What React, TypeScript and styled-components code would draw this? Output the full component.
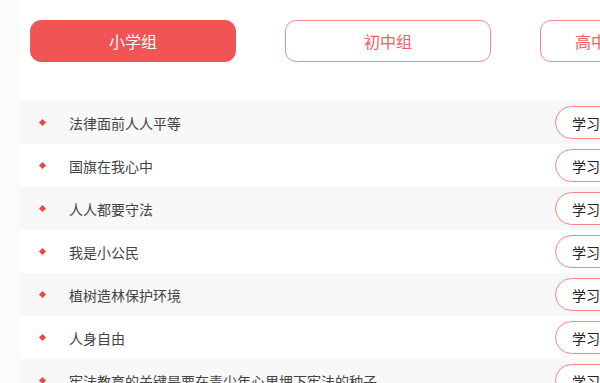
import styled, { createGlobalStyle } from "styled-components";

const GlobalStyle = createGlobalStyle`
  html, body {
    margin: 0;
    padding: 0;
    overflow: hidden;
    background: #fbfbfb;
    font-family: "Liberation Sans", "Noto Sans CJK SC", sans-serif;
  }
`;

const Panel = styled.div`
  width: 627px;
  margin-left: 20px;
  background: #ffffff;
  min-height: 383px;
`;

const TabBar = styled.div`
  display: flex;
  gap: 49px;
  width: 638px;
  box-sizing: border-box;
  padding: 20px 0 39px 10px;
`;

const Tab = styled.button<{ $active?: boolean; $fluid?: boolean }>`
  flex: ${(p) => (p.$fluid ? "1 1 auto" : "0 0 206px")};
  min-width: 0;
  height: 42px;
  box-sizing: border-box;
  border-radius: 11px;
  border: 1px solid ${(p) => (p.$active ? "#f05454" : "#f58b8b")};
  background: ${(p) => (p.$active ? "#f05454" : "#ffffff")};
  color: ${(p) => (p.$active ? "#ffffff" : "#f06161")};
  font-family: "Liberation Sans", "Noto Sans CJK SC", sans-serif;
  font-size: 16px;
  white-space: nowrap;
  padding: 0;
  cursor: pointer;
`;

const List = styled.ul`
  list-style: none;
  margin: 0;
  padding: 0;
`;

const Row = styled.li<{ $shade: boolean }>`
  display: flex;
  align-items: center;
  height: 43px;
  padding-right: 20px;
  background: ${(p) => (p.$shade ? "#f8f8f8" : "#ffffff")};
`;

const Bullet = styled.span`
  width: 5px;
  height: 5px;
  margin: 0 24px 0 20px;
  background: #f04545;
  transform: rotate(45deg);
  flex-shrink: 0;
`;

const Title = styled.span`
  flex: 1;
  font-size: 14px;
  color: #444444;
  white-space: nowrap;
`;

const LearnButton = styled.button`
  width: 72px;
  height: 33px;
  box-sizing: border-box;
  border: 1px solid #f58585;
  border-radius: 17px;
  background: #ffffff;
  color: #222222;
  font-family: "Liberation Sans", "Noto Sans CJK SC", sans-serif;
  font-size: 14px;
  text-align: left;
  padding: 0 0 0 16px;
  white-space: nowrap;
  cursor: pointer;
`;

const tabs = ["小学组", "初中组", "高中组"];

const lessons = [
  "法律面前人人平等",
  "国旗在我心中",
  "人人都要守法",
  "我是小公民",
  "植树造林保护环境",
  "人身自由",
  "宪法教育的关键是要在青少年心里埋下宪法的种子",
];

export default function App() {
  return (
    <>
      <GlobalStyle />
      <Panel>
        <TabBar>
          {tabs.map((t, i) => (
            <Tab key={t} $active={i === 0} $fluid={i === tabs.length - 1}>
              {t}
            </Tab>
          ))}
        </TabBar>
        <List>
          {lessons.map((l, i) => (
            <Row key={l} $shade={i % 2 === 0}>
              <Bullet />
              <Title>{l}</Title>
              <LearnButton>学习</LearnButton>
            </Row>
          ))}
        </List>
      </Panel>
    </>
  );
}
